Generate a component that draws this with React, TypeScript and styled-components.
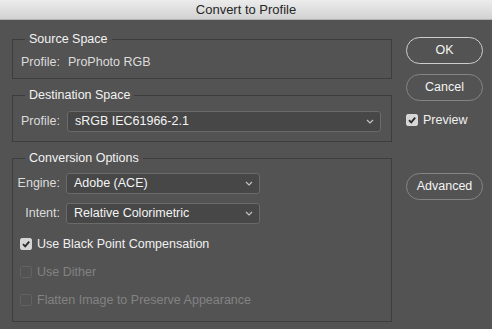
import React from 'react'
import styled, { createGlobalStyle } from 'styled-components'

const GlobalStyle = createGlobalStyle`
	html,
	body {
		margin: 0;
		padding: 0;
		background: #535353;
	}
	body {
		width: 492px;
		height: 329px;
		overflow: hidden;
		font-family: 'Liberation Sans', Arial, Helvetica, sans-serif;
		font-size: 12.5px;
		line-height: 15px;
		color: #e6e6e6;
	}
`

const Window = styled.div`
	width: 492px;
	height: 329px;
	display: flex;
	flex-direction: column;
	background: #535353;
`

const TitleBar = styled.div`
	height: 20px;
	box-sizing: border-box;
	display: flex;
	align-items: center;
	justify-content: center;
	background: linear-gradient(#ececec, #d2d2d2);
	border-bottom: 1px solid #b2b2b2;
	font-size: 13px;
	color: #262626;
`

const Body = styled.div`
	display: flex;
	gap: 14px;
	padding: 12px 0 0 12px;
`

const Groups = styled.div`
	width: 380px;
	display: flex;
	flex-direction: column;
	gap: 9px;
`

const Group = styled.fieldset`
	margin: 0;
	padding: 0;
	min-width: 0;
	border: 1px solid #3d3d3d;
`

const Legend = styled.legend`
	margin-left: 12px;
	padding: 0 4px;
	font-size: 12.5px;
	line-height: 15px;
	color: #f2f2f2;
`

const InfoRow = styled.div`
	display: flex;
	gap: 8px;
	padding: 8px 0 8px 8px;
	color: #dcdcdc;
`

const FieldRow = styled.div`
	display: flex;
	align-items: center;
	gap: 7px;
	padding: 8px 10px 9px 8px;
	color: #dcdcdc;
`

const OptionsGrid = styled.div`
	display: grid;
	grid-template-columns: 43px 194px;
	column-gap: 6px;
	row-gap: 9px;
	align-items: center;
	padding: 7px 0 0 4px;
`

const Label = styled.span`
	text-align: right;
	color: #dcdcdc;
	white-space: nowrap;
`

const SelectBox = styled.div<{ $grow?: boolean }>`
	height: 21px;
	box-sizing: border-box;
	display: flex;
	align-items: center;
	justify-content: space-between;
	flex: ${p => (p.$grow ? '1' : 'none')};
	padding: 0 6px 0 7px;
	border: 1px solid #6a6a6a;
	border-radius: 3px;
	background: #474747;
	color: #f4f4f4;
`

const Checks = styled.div`
	display: flex;
	flex-direction: column;
	gap: 12px;
	padding: 12px 0 13px 7px;
`

const CheckRow = styled.label<{ $disabled?: boolean }>`
	display: flex;
	align-items: center;
	gap: 5px;
	height: 16px;
	color: ${p => (p.$disabled ? '#828282' : '#f0f0f0')};
`

const Box = styled.span<{ $checked?: boolean }>`
	width: 12px;
	height: 12px;
	box-sizing: border-box;
	display: flex;
	align-items: center;
	justify-content: center;
	border-radius: 2px;
	background: ${p => (p.$checked ? '#d6d6d6' : 'transparent')};
	border: 1px solid ${p => (p.$checked ? '#d6d6d6' : '#626262')};
`

const Actions = styled.div`
	width: 77px;
	display: flex;
	flex-direction: column;
	padding-top: 5px;
`

const PillButton = styled.button<{ $primary?: boolean }>`
	height: 27px;
	padding: 0;
	border-radius: 14px;
	border: 1px solid ${p => (p.$primary ? '#cdcdcd' : '#858585')};
	background: transparent;
	font: inherit;
	font-size: 12.5px;
	color: #f4f4f4;
`

const Spacer = styled.div<{ $h: number }>`
	height: ${p => p.$h}px;
`

const Chevron = () => (
	<svg width="8" height="5" viewBox="0 0 8 5">
		<path d="M1 1 L4 4 L7 1" fill="none" stroke="#c4c4c4" strokeWidth="1.2" />
	</svg>
)

const Checkbox: React.FC<{ checked?: boolean; disabled?: boolean; label: string }> = ({
	checked,
	disabled,
	label,
}) => (
	<CheckRow $disabled={disabled}>
		<Box $checked={checked}>
			{checked && (
				<svg width="10" height="10" viewBox="0 0 10 10">
					<path d="M2 5.2 L4.2 7.4 L8.2 2.6" fill="none" stroke="#2a2a2a" strokeWidth="1.8" />
				</svg>
			)}
		</Box>
		{label}
	</CheckRow>
)

export default function App() {
	return (
		<Window>
			<GlobalStyle />
			<TitleBar>Convert to Profile</TitleBar>
			<Body>
				<Groups>
					<Group>
						<Legend>Source Space</Legend>
						<InfoRow>
							<span>Profile:</span>
							<span>ProPhoto RGB</span>
						</InfoRow>
					</Group>
					<Group>
						<Legend>Destination Space</Legend>
						<FieldRow>
							<Label>Profile:</Label>
							<SelectBox $grow>
								sRGB IEC61966-2.1
								<Chevron />
							</SelectBox>
						</FieldRow>
					</Group>
					<Group>
						<Legend>Conversion Options</Legend>
						<OptionsGrid>
							<Label>Engine:</Label>
							<SelectBox>
								Adobe (ACE)
								<Chevron />
							</SelectBox>
							<Label>Intent:</Label>
							<SelectBox>
								Relative Colorimetric
								<Chevron />
							</SelectBox>
						</OptionsGrid>
						<Checks>
							<Checkbox checked label="Use Black Point Compensation" />
							<Checkbox disabled label="Use Dither" />
							<Checkbox disabled label="Flatten Image to Preserve Appearance" />
						</Checks>
					</Group>
				</Groups>
				<Actions>
					<PillButton $primary>OK</PillButton>
					<Spacer $h={10} />
					<PillButton>Cancel</PillButton>
					<Spacer $h={11} />
					<Checkbox checked label="Preview" />
					<Spacer $h={45} />
					<PillButton>Advanced</PillButton>
				</Actions>
			</Body>
		</Window>
	)
}
